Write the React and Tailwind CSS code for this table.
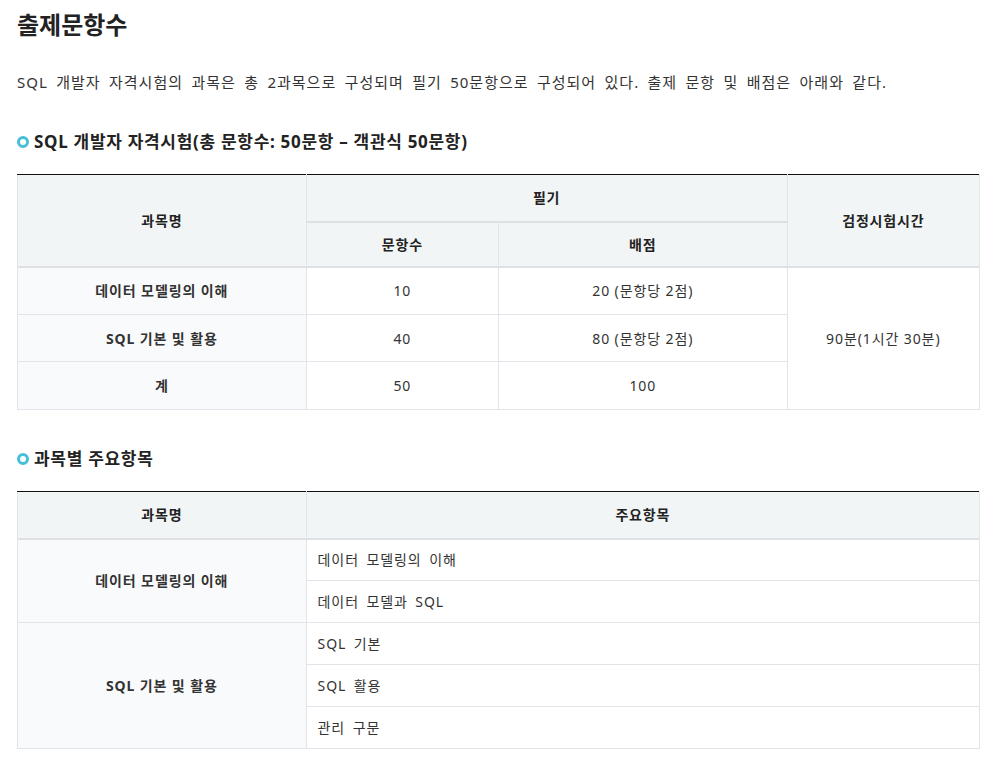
import React from 'react';

const examRows = [
    { name: '데이터 모델링의 이해', count: '10', score: '20 (문항당 2점)', h: 'h-[48px]' },
    { name: 'SQL 기본 및 활용', count: '40', score: '80 (문항당 2점)', h: 'h-[47px]' },
    { name: '계', count: '50', score: '100', h: 'h-[48px]' },
];

const topics = [
    { name: '데이터 모델링의 이해', items: ['데이터 모델링의 이해', '데이터 모델과 SQL'] },
    { name: 'SQL 기본 및 활용', items: ['SQL 기본', 'SQL 활용', '관리 구문'] },
];

const SectionTitle = ({ children }) => (
    <h3 className="flex items-center gap-[5px] text-[17px] font-bold text-[#222] leading-[24px] tracking-[0.7px]">
        <span className="inline-block w-[12px] h-[12px] rounded-full border-[3px] border-[#46bfd9] bg-white" />
        {children}
    </h3>
);

const th = "border border-[#e1e4e8] bg-[#f2f5f6] text-[14px] font-bold text-[#222] text-center p-0 tracking-[0.8px]";
const td = "border border-[#e1e4e8] text-[14px] text-[#333] text-center p-0 tracking-[0.9px]";

const App = () => {
    return (
        <div className="bg-white min-h-[764px] px-[17px] pt-[7px] pb-4 text-[#333]" style={{ fontFamily: '"Noto Sans", "Noto Sans CJK KR", sans-serif' }}>
            <h2 className="text-[24px] font-bold text-[#222] leading-[36px]">출제문항수</h2>

            <p className="mt-[27px] text-[15px] leading-[24px] text-[#333] tracking-[1px] [word-spacing:3.5px]">
                SQL 개발자 자격시험의 과목은 총 2과목으로 구성되며 필기 50문항으로 구성되어 있다. 출제 문항 및 배점은 아래와 같다.
            </p>

            <div className="mt-[36px]">
                <SectionTitle>SQL 개발자 자격시험(총 문항수: 50문항 – 객관식 50문항)</SectionTitle>
            </div>

            {/* 시험 구성 표 */}
            <table className="mt-[20px] w-full border-collapse table-fixed border-t border-t-[#111]">
                <colgroup>
                    <col className="w-[30%]" />
                    <col className="w-[20%]" />
                    <col className="w-[30%]" />
                    <col className="w-[20%]" />
                </colgroup>
                <thead>
                    <tr className="h-[47px]">
                        <th rowSpan={2} className={th + " border-t-[#111] border-b-2 border-b-[#dde1e5]"}>과목명</th>
                        <th colSpan={2} className={th + " border-t-[#111] border-b-2 border-b-[#dde1e5]"}>필기</th>
                        <th rowSpan={2} className={th + " border-t-[#111] border-b-2 border-b-[#dde1e5]"}>검정시험시간</th>
                    </tr>
                    <tr className="h-[45px]">
                        <th className={th + " border-b-2 border-b-[#dde1e5]"}>문항수</th>
                        <th className={th + " border-b-2 border-b-[#dde1e5]"}>배점</th>
                    </tr>
                </thead>
                <tbody>
                    {examRows.map((row, i) => (
                        <tr key={row.name} className={row.h}>
                            <td className={td + " bg-[#f9fafb] font-bold text-[#222] tracking-[0.8px]"}>{row.name}</td>
                            <td className={td}>{row.count}</td>
                            <td className={td}>{row.score}</td>
                            {i === 0 && <td rowSpan={3} className={td}>90분(1시간 30분)</td>}
                        </tr>
                    ))}
                </tbody>
            </table>

            <div className="mt-[37px]">
                <SectionTitle>과목별 주요항목</SectionTitle>
            </div>

            {/* 과목별 주요항목 표 */}
            <table className="mt-[20px] w-full border-collapse table-fixed border-t border-t-[#111]">
                <colgroup>
                    <col className="w-[30%]" />
                    <col className="w-[70%]" />
                </colgroup>
                <thead>
                    <tr className="h-[47px]">
                        <th className={th + " border-t-[#111] border-b-2 border-b-[#dde1e5]"}>과목명</th>
                        <th className={th + " border-t-[#111] border-b-2 border-b-[#dde1e5]"}>주요항목</th>
                    </tr>
                </thead>
                <tbody>
                    {topics.map(group =>
                        group.items.map((item, j) => (
                            <tr key={item} className="h-[42px]">
                                {j === 0 && (
                                    <td rowSpan={group.items.length} className={td + " bg-[#f9fafb] font-bold text-[#222] tracking-[0.8px]"}>
                                        {group.name}
                                    </td>
                                )}
                                <td className={td + " text-left pl-[11px] [word-spacing:3px]"}>{item}</td>
                            </tr>
                        ))
                    )}
                </tbody>
            </table>
        </div>
    );
};

export default App;
